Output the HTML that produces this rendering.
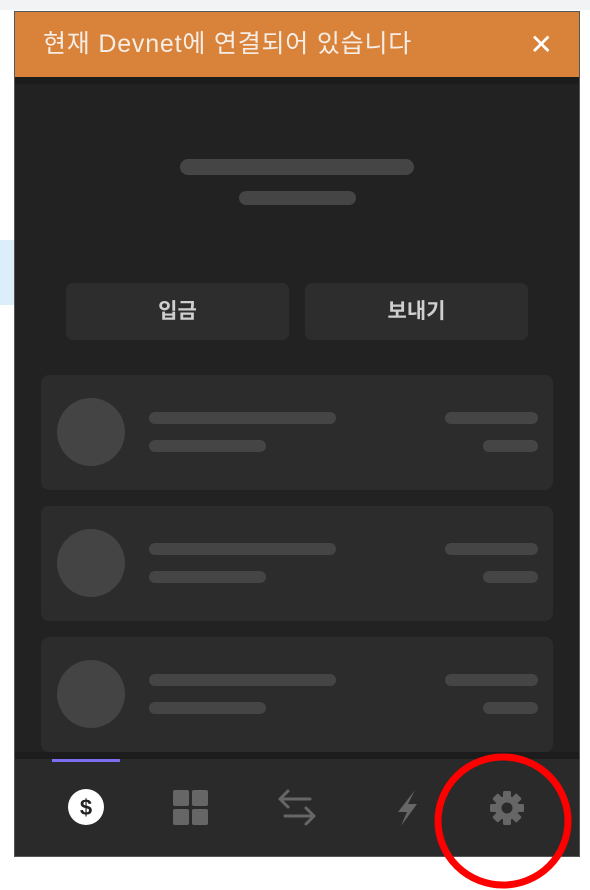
<!DOCTYPE html>
<html><head><meta charset="utf-8"><style>
*{margin:0;padding:0;box-sizing:border-box}
body{width:590px;height:890px;background:#fff;position:relative;overflow:hidden;font-family:"Liberation Sans","Noto Sans CJK KR",sans-serif}
.a{position:absolute}
.bar{position:absolute;background:#454545;border-radius:6px;height:12px}
.card{position:absolute;left:41px;width:512px;height:115px;background:#2c2c2c;border-radius:8px}
.btn{position:absolute;top:283px;height:57px;width:223px;background:#2d2d2d;border-radius:7px;color:#cfcfcf;font-weight:bold;font-size:21px;text-align:center;line-height:57px}
</style></head><body>
<div class="a" style="left:0;top:0;width:590px;height:10px;background:#f1f3f4"></div>
<div class="a" style="left:0;top:240px;width:15px;height:65px;background:#dceefa"></div>
<div class="a" style="left:14px;top:11px;width:566px;height:846px;background:#222;border:1px solid #555"></div>
<div class="a" style="left:15px;top:12px;width:564px;height:65px;background:#d8823a;color:#f6eee6;font-size:25px;letter-spacing:0.8px;line-height:65px;padding-left:28px">현재 Devnet에 연결되어 있습니다
<span style="position:absolute;right:26px;top:0;font-size:28px;color:#fff;letter-spacing:0">✕</span></div>
<div class="a" style="left:15px;top:77px;width:564px;height:7px;background:#1c1c1c"></div>
<div class="bar" style="left:180px;top:159px;width:234px;height:16px;border-radius:8px"></div>
<div class="bar" style="left:239px;top:191px;width:117px;height:14px;border-radius:7px"></div>
<div class="btn" style="left:66px">입금</div>
<div class="btn" style="left:305px">보내기</div>
<div class="card" style="top:375px"></div>
<div class="card" style="top:506px"></div>
<div class="card" style="top:637px"></div>
<div class="a" style="left:57px;top:398px;width:68px;height:68px;border-radius:50%;background:#444"></div>
<div class="a" style="left:57px;top:529px;width:68px;height:68px;border-radius:50%;background:#444"></div>
<div class="a" style="left:57px;top:660px;width:68px;height:68px;border-radius:50%;background:#444"></div>
<div class="bar" style="left:149px;top:412px;width:187px"></div><div class="bar" style="left:149px;top:440px;width:117px"></div>
<div class="bar" style="left:445px;top:412px;width:93px"></div><div class="bar" style="left:483px;top:440px;width:55px"></div>
<div class="bar" style="left:149px;top:543px;width:187px"></div><div class="bar" style="left:149px;top:571px;width:117px"></div>
<div class="bar" style="left:445px;top:543px;width:93px"></div><div class="bar" style="left:483px;top:571px;width:55px"></div>
<div class="bar" style="left:149px;top:674px;width:187px"></div><div class="bar" style="left:149px;top:702px;width:117px"></div>
<div class="bar" style="left:445px;top:674px;width:93px"></div><div class="bar" style="left:483px;top:702px;width:55px"></div>
<div class="a" style="left:15px;top:752px;width:564px;height:8px;background:#1c1c1c"></div>
<div class="a" style="left:15px;top:759px;width:564px;height:97px;background:#2a2a2a"></div>
<div class="a" style="left:52px;top:759px;width:68px;height:3px;background:#7b6ff0"></div>
<svg class="a" style="left:0;top:0" width="590" height="890">
<circle cx="86" cy="807" r="18" fill="#fff"/>
<text x="86" y="815" text-anchor="middle" font-size="22" font-weight="bold" fill="#222" font-family="Liberation Sans">$</text>
<g fill="#666"><rect x="173" y="790" width="16" height="16" rx="2"/><rect x="192" y="790" width="16" height="16" rx="2"/><rect x="173" y="809" width="16" height="16" rx="2"/><rect x="192" y="809" width="16" height="16" rx="2"/></g>
<g stroke="#666" stroke-width="3" fill="none" stroke-linecap="round" stroke-linejoin="round"><path d="M280 799H310M288 791L280 799L288 807"/><path d="M285 816H314M306 808L314 816L306 824"/></g>
<path d="M415 790L398 812H407L401 826L417 804H408Z" fill="#666"/>
<g transform="translate(507 808)"><circle r="12" fill="#666"/><g fill="#666"><rect x="-4" y="-17" width="8" height="34" rx="1.5"/><rect x="-4" y="-17" width="8" height="34" rx="1.5" transform="rotate(45)"/><rect x="-4" y="-17" width="8" height="34" rx="1.5" transform="rotate(90)"/><rect x="-4" y="-17" width="8" height="34" rx="1.5" transform="rotate(135)"/></g><circle r="5.5" fill="#2a2a2a"/></g>
<ellipse cx="503" cy="821" rx="65" ry="64" fill="none" stroke="#f00" stroke-width="7"/>
</svg>
</body></html>
